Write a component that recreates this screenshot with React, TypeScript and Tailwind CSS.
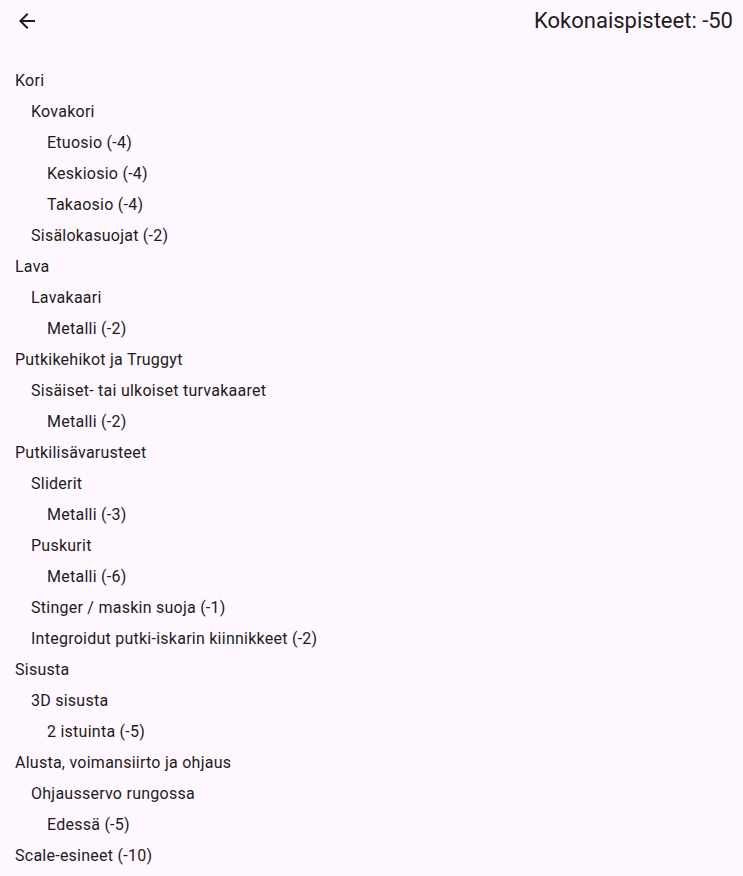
import React from "react";

type Row = { t: string; l: number };

const rows: Row[] = [
  { t: "Kori", l: 0 },
  { t: "Kovakori", l: 1 },
  { t: "Etuosio (-4)", l: 2 },
  { t: "Keskiosio (-4)", l: 2 },
  { t: "Takaosio (-4)", l: 2 },
  { t: "Sisälokasuojat (-2)", l: 1 },
  { t: "Lava", l: 0 },
  { t: "Lavakaari", l: 1 },
  { t: "Metalli (-2)", l: 2 },
  { t: "Putkikehikot ja Truggyt", l: 0 },
  { t: "Sisäiset- tai ulkoiset turvakaaret", l: 1 },
  { t: "Metalli (-2)", l: 2 },
  { t: "Putkilisävarusteet", l: 0 },
  { t: "Sliderit", l: 1 },
  { t: "Metalli (-3)", l: 2 },
  { t: "Puskurit", l: 1 },
  { t: "Metalli (-6)", l: 2 },
  { t: "Stinger / maskin suoja (-1)", l: 1 },
  { t: "Integroidut putki-iskarin kiinnikkeet (-2)", l: 1 },
  { t: "Sisusta", l: 0 },
  { t: "3D sisusta", l: 1 },
  { t: "2 istuinta (-5)", l: 2 },
  { t: "Alusta, voimansiirto ja ohjaus", l: 0 },
  { t: "Ohjausservo rungossa", l: 1 },
  { t: "Edessä (-5)", l: 2 },
  { t: "Scale-esineet (-10)", l: 0 },
];

const indent = ["pl-[15px]", "pl-[31px]", "pl-[47px]"];

export default function App() {
  return (
    <div
      className="w-[743px] h-[876px] overflow-hidden bg-[#fef7ff] text-[#1d1b20]"
      style={{ fontFamily: "Roboto, 'Noto Sans', sans-serif" }}
    >
      <div className="flex h-[41px] items-center justify-between pl-[15px] pr-[10px]">
        <div className="flex h-6 w-6 items-center justify-center">
          <svg width="24" height="24" viewBox="0 0 24 24" fill="#1d1b20">
            <path d="M20 11H7.83l5.59-5.59L12 4l-8 8 8 8 1.41-1.41L7.83 13H20v-2z" />
          </svg>
        </div>
        <div className="text-[22px] leading-[28px] tracking-[0px]">Kokonaispisteet: -50</div>
      </div>
      <div className="flex flex-col pt-[24px]">
        {rows.map((r, i) => (
          <div
            key={i}
            className={`flex h-[31px] items-center text-[16px] leading-[24px] tracking-[0.25px] ${indent[r.l]}`}
          >
            {r.t}
          </div>
        ))}
      </div>
    </div>
  );
}
